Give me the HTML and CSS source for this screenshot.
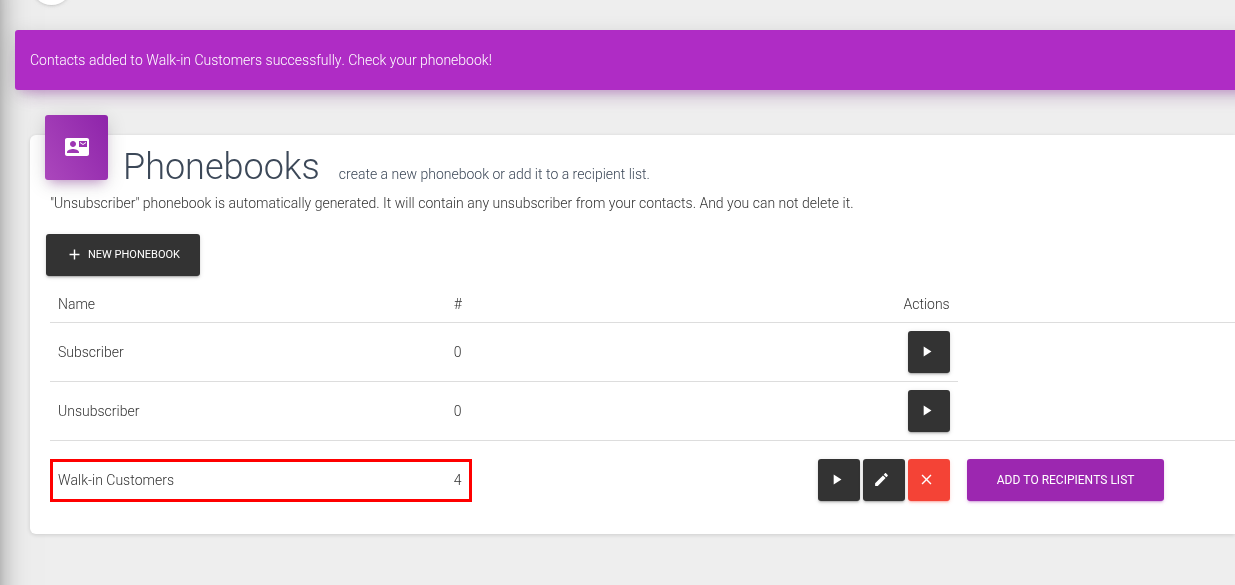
FILE: index.html
```html
<!DOCTYPE html>
<html lang="en">
<head>
<meta charset="utf-8">
<title>Phonebooks</title>
<link rel="stylesheet" href="styles.css">
</head>
<body>
<svg class="sprite" aria-hidden="true">
  <symbol id="contact" viewBox="0 0 24 24"><path d="M21 8V7l-3 2-3-2v1l3 2 3-2zm1-5H2C.9 3 0 3.9 0 5v14c0 1.1.9 2 2 2h20c1.1 0 1.99-.9 1.99-2L24 5c0-1.1-.9-2-2-2zM8 6c1.66 0 3 1.34 3 3s-1.34 3-3 3-3-1.34-3-3 1.34-3 3-3zm6 12H2v-1c0-2 4-3.1 6-3.1s6 1.1 6 3.1v1zm8-6h-8V6h8v6z"/></symbol>
  <symbol id="add" viewBox="0 0 24 24"><path d="M19 13h-6v6h-2v-6H5v-2h6V5h2v6h6v2z"/></symbol>
  <symbol id="play" viewBox="0 0 24 24"><path d="M8 5v14l11-7z"/></symbol>
  <symbol id="edit" viewBox="0 0 24 24"><path d="M3 17.25V21h3.75L17.81 9.94l-3.75-3.75L3 17.25zM20.71 7.04c.39-.39.39-1.02 0-1.41l-2.34-2.34c-.39-.39-1.02-.39-1.41 0l-1.83 1.83 3.75 3.75 1.83-1.83z"/></symbol>
  <symbol id="close" viewBox="0 0 24 24"><path d="M19 6.41L17.59 5 12 10.59 6.41 5 5 6.41 10.59 12 5 17.59 6.41 19 12 13.41 17.59 19 19 17.59 13.41 12z"/></symbol>
</svg>
<div class="sidebar-edge"></div>
<header class="topbar">
  <button class="menu-toggle" type="button" aria-label="Toggle menu"></button>
</header>
<main class="content">
  <div class="alert" role="status">Contacts added to Walk-in Customers successfully. Check your phonebook!</div>
  <section class="card">
    <div class="card-head">
      <div class="card-icon"><svg class="icon-large"><use href="#contact"/></svg></div>
      <h1 class="title">Phonebooks</h1>
      <p class="subtitle">create a new phonebook or add it to a recipient list.</p>
    </div>
    <p class="note">"Unsubscriber" phonebook is automatically generated. It will contain any unsubscriber from your contacts. And you can not delete it.</p>
    <button class="btn btn-new" type="button"><svg class="icon"><use href="#add"/></svg>NEW PHONEBOOK</button>
    <table class="table">
      <colgroup><col class="col-name"><col class="col-count"><col class="col-actions"><col></colgroup>
      <thead>
        <tr><th>Name</th><th>#</th><th class="right">Actions</th><th></th></tr>
      </thead>
      <tbody>
        <tr>
          <td>Subscriber</td><td>0</td>
          <td><div class="actions"><button class="btn btn-icon" type="button" aria-label="Open Subscriber"><svg class="icon"><use href="#play"/></svg></button></div></td>
        </tr>
        <tr>
          <td>Unsubscriber</td><td>0</td>
          <td><div class="actions"><button class="btn btn-icon" type="button" aria-label="Open Unsubscriber"><svg class="icon"><use href="#play"/></svg></button></div></td>
          <td></td>
        </tr>
        <tr class="last">
          <td>Walk-in Customers</td>
          <td class="marked">4</td>
          <td><div class="actions">
            <button class="btn btn-icon" type="button" aria-label="Open Walk-in Customers"><svg class="icon"><use href="#play"/></svg></button>
            <button class="btn btn-icon" type="button" aria-label="Edit Walk-in Customers"><svg class="icon"><use href="#edit"/></svg></button>
            <button class="btn btn-icon btn-danger" type="button" aria-label="Delete Walk-in Customers"><svg class="icon"><use href="#close"/></svg></button>
          </div></td>
          <td><form class="recipients"><button class="btn btn-primary" type="button">ADD TO RECIPIENTS LIST</button></form></td>
        </tr>
      </tbody>
    </table>
  </section>
</main>
</body>
</html>
```
FILE: styles.css
```css
*, *::before { box-sizing: border-box; }

body {
  margin: 0;
  min-height: 100vh;
  overflow-x: hidden;
  background: #eee;
  color: #333;
  font: 300 14px/20px Roboto, sans-serif;
  font-kerning: none;
}

.sprite { position: absolute; width: 0; height: 0; }

.sidebar-edge {
  position: fixed;
  top: -60px;
  bottom: -60px;
  left: -260px;
  width: 260px;
  box-shadow: 0 16px 38px -12px rgba(0, 0, 0, .56), 0 4px 25px 0 rgba(0, 0, 0, .12), 0 8px 10px -5px rgba(0, 0, 0, .2);
}

.topbar { display: flex; height: 30px; padding-left: 31px; }

.menu-toggle {
  flex: none;
  width: 41px;
  height: 41px;
  margin-top: -36px;
  padding: 0;
  border: 0;
  border-radius: 50%;
  background: #fff;
  box-shadow: 0 2px 2px 0 rgba(153, 153, 153, .14), 0 3px 1px -2px rgba(153, 153, 153, .2), 0 1px 5px 0 rgba(153, 153, 153, .12);
}

.content { padding-left: 15px; }

.alert {
  position: relative;
  margin-right: -30px;
  padding: 20px 15px;
  border-radius: 3px;
  background: #af2cc5;
  color: #fff;
  box-shadow: 0 12px 20px -10px rgba(156, 39, 176, .28), 0 4px 20px 0 rgba(0, 0, 0, .12), 0 7px 8px -5px rgba(156, 39, 176, .2);
}

.card {
  position: relative;
  margin: 45px 0 25px 15px;
  padding: 0 0 15px 20px;
  border-radius: 6px 0 0 6px;
  background: #fff;
  box-shadow: 0 1px 4px 0 rgba(0, 0, 0, .14);
}

.card-head {
  display: flex;
  align-items: baseline;
  margin-left: -5px;
  color: #3c4858;
}

.card-icon {
  display: flex;
  align-self: flex-start;
  justify-content: center;
  width: 63px;
  height: 65px;
  margin: -20px 15px 0 0;
  padding-top: 20px;
  border-radius: 3px;
  background: linear-gradient(60deg, #ab47bc, #8e24aa);
  box-shadow: 0 4px 20px 0 rgba(0, 0, 0, .14), 0 7px 10px -5px rgba(156, 39, 176, .4);
}

.icon-large { width: 24px; height: 24px; fill: #fff; }

.title { margin: 10px 19px 0 0; font-size: 36px; font-weight: 300; line-height: 44px; }

.subtitle { margin: 0; }

.note { margin: 4px 0 21px; }

.btn {
  display: inline-flex;
  align-items: flex-start;
  justify-content: center;
  height: 42px;
  margin: 0 1px;
  padding: 12px 30px;
  border: 0;
  border-radius: 3px;
  background: #333;
  color: #fff;
  font: 400 12px/18px Roboto, sans-serif;
  font-kerning: none;
  box-shadow: 0 2px 2px 0 rgba(51, 51, 51, .14), 0 3px 1px -2px rgba(51, 51, 51, .2), 0 1px 5px 0 rgba(51, 51, 51, .12);
}

.icon { flex: none; width: 17px; height: 17px; fill: #fff; }

.btn-new { display: flex; gap: 5px; margin-left: -4px; padding: 12px 20px; font-size: 11px; }

.btn-icon { justify-content: flex-start; width: 42px; margin: 0; padding: 12px 10px; }

.btn-danger {
  background: #f44336;
  box-shadow: 0 2px 2px 0 rgba(244, 67, 54, .14), 0 3px 1px -2px rgba(244, 67, 54, .2), 0 1px 5px 0 rgba(244, 67, 54, .12);
}

.btn-primary {
  background: #9c27b0;
  box-shadow: 0 2px 2px 0 rgba(156, 39, 176, .14), 0 3px 1px -2px rgba(156, 39, 176, .2), 0 1px 5px 0 rgba(156, 39, 176, .12);
}

.table { width: 100%; margin-top: 10px; border-collapse: separate; border-spacing: 0; table-layout: fixed; }

.col-name { width: 33.4%; }
.col-count { width: 10%; }
.col-actions { width: 33.2%; }

th, td {
  padding: 8px;
  border-bottom: 1px solid #ddd;
  font-weight: 300;
  text-align: left;
  vertical-align: middle;
}

.right { text-align: right; }

.actions { display: flex; justify-content: flex-end; gap: 3px; }

.last { position: relative; }
.last td { border-bottom: 0; }

/* Outline around the updated phonebook's name and count */
.marked::before {
  content: "";
  position: absolute;
  top: 18px;
  left: 0;
  width: 422px;
  height: 43px;
  border: 3px solid #f00;
}

.recipients { display: flex; margin: 10px 0; }
```
